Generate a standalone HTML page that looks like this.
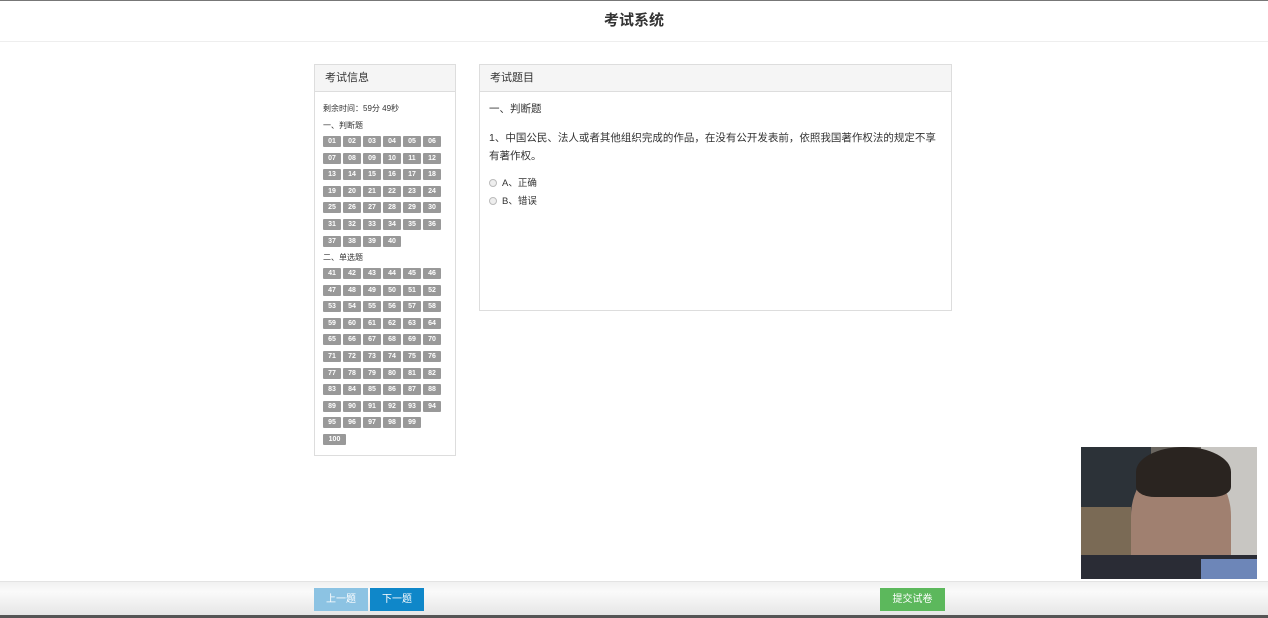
<!DOCTYPE html>
<html><head><meta charset="utf-8"><style>
*{margin:0;padding:0;box-sizing:border-box}
body{width:1268px;height:618px;position:relative;background:#fff;font-family:"Liberation Sans","Noto Sans CJK SC",sans-serif;color:#333;overflow:hidden}
.hdr{position:absolute;left:0;top:0;width:1268px;height:42px;border-top:1px solid #777;border-bottom:1px solid #eee;text-align:center;font-size:15px;font-weight:bold;line-height:40px;color:#333}
.panel{position:absolute;border:1px solid #ddd;background:#fff}
.ph{height:27px;background:#f5f5f5;border-bottom:1px solid #ddd;font-size:11px;line-height:26px;padding-left:10px;color:#333}
.t{position:absolute;font-size:8px;color:#333}
.n{position:absolute;width:18px;height:11px;background:#999;color:#fff;font-size:7px;font-weight:bold;text-align:center;line-height:11px;border-radius:1px}
.q{position:absolute;font-size:10.5px;color:#333}
.r{display:inline-block;width:8px;height:8px;border-radius:50%;border:1px solid #bbb;background:#eee;vertical-align:-1px;margin-right:5px}
.foot{position:absolute;left:0;top:581px;width:1268px;height:37px;background:linear-gradient(#f0f0f0,#fafafa 30%,#e6e6e6);border-top:1px solid #e3e3e3;border-bottom:3px solid #555}
.btn{position:absolute;top:588px;height:23px;color:#fff;font-size:10px;text-align:center;line-height:23px}
</style></head><body>
<div class="hdr">考试系统</div>
<div class="panel" style="left:314px;top:64px;width:142px;height:392px"><div class="ph">考试信息</div></div>
<div class="panel" style="left:479px;top:64px;width:473px;height:247px"><div class="ph">考试题目</div></div>
<div class="t" style="left:323px;top:103px">剩余时间：59分 49秒</div>
<div class="t" style="left:323px;top:120px">一、判断题</div>
<div class="t" style="left:323px;top:252px">二、单选题</div>
<div id="g"></div>
<div class="q" style="left:489px;top:101px">一、判断题</div>
<div class="q" style="left:489px;top:129px;width:455px;line-height:18px">1、中国公民、法人或者其他组织完成的作品，在没有公开发表前，依照我国著作权法的规定不享有著作权。</div>
<div class="q" style="left:489px;top:175px;font-size:9.5px"><span class="r"></span>A、正确</div>
<div class="q" style="left:489px;top:193px;font-size:9.5px"><span class="r"></span>B、错误</div>
<div style="position:absolute;left:1081px;top:447px;width:176px;height:132px;background:#6a6660;overflow:hidden">
<div style="position:absolute;left:0;top:0;width:70px;height:132px;background:#2c3238"></div>
<div style="position:absolute;left:120px;top:0;width:56px;height:132px;background:#c8c6c2"></div>
<div style="position:absolute;left:0;top:60px;width:50px;height:72px;background:#7a6a55"></div>
<div style="position:absolute;left:50px;top:15px;width:100px;height:120px;border-radius:45% 45% 20% 20%;background:#a08070"></div>
<div style="position:absolute;left:55px;top:0;width:95px;height:50px;border-radius:50% 50% 20% 20%;background:#2a2420"></div>
<div style="position:absolute;left:0;top:108px;width:176px;height:24px;background:#2a2c35"></div>
<div style="position:absolute;left:120px;top:112px;width:56px;height:20px;background:#6d86b8"></div>
</div>
<div class="foot"></div>
<div class="btn" style="left:314px;width:54px;background:#8cc3e3">上一题</div>
<div class="btn" style="left:370px;width:54px;background:#0f87c9">下一题</div>
<div class="btn" style="left:880px;width:65px;background:#5cb85c">提交试卷</div>
<script>
var g=document.getElementById('g'),h='';
function add(a,b,y0){var i=0;for(var k=a;k<=b;k++,i++){var idx=(k==100)?i+1:i;var r=Math.floor(idx/6),c=idx%6;var s=k<10?'0'+k:''+k;h+='<div class="n" style="left:'+(323+c*20)+'px;top:'+Math.round(y0+r*16.6)+'px;'+(k==100?'width:23px':'')+'">'+s+'</div>';}}
add(1,40,136);add(41,100,268);g.innerHTML=h;
</script>
</body></html>
